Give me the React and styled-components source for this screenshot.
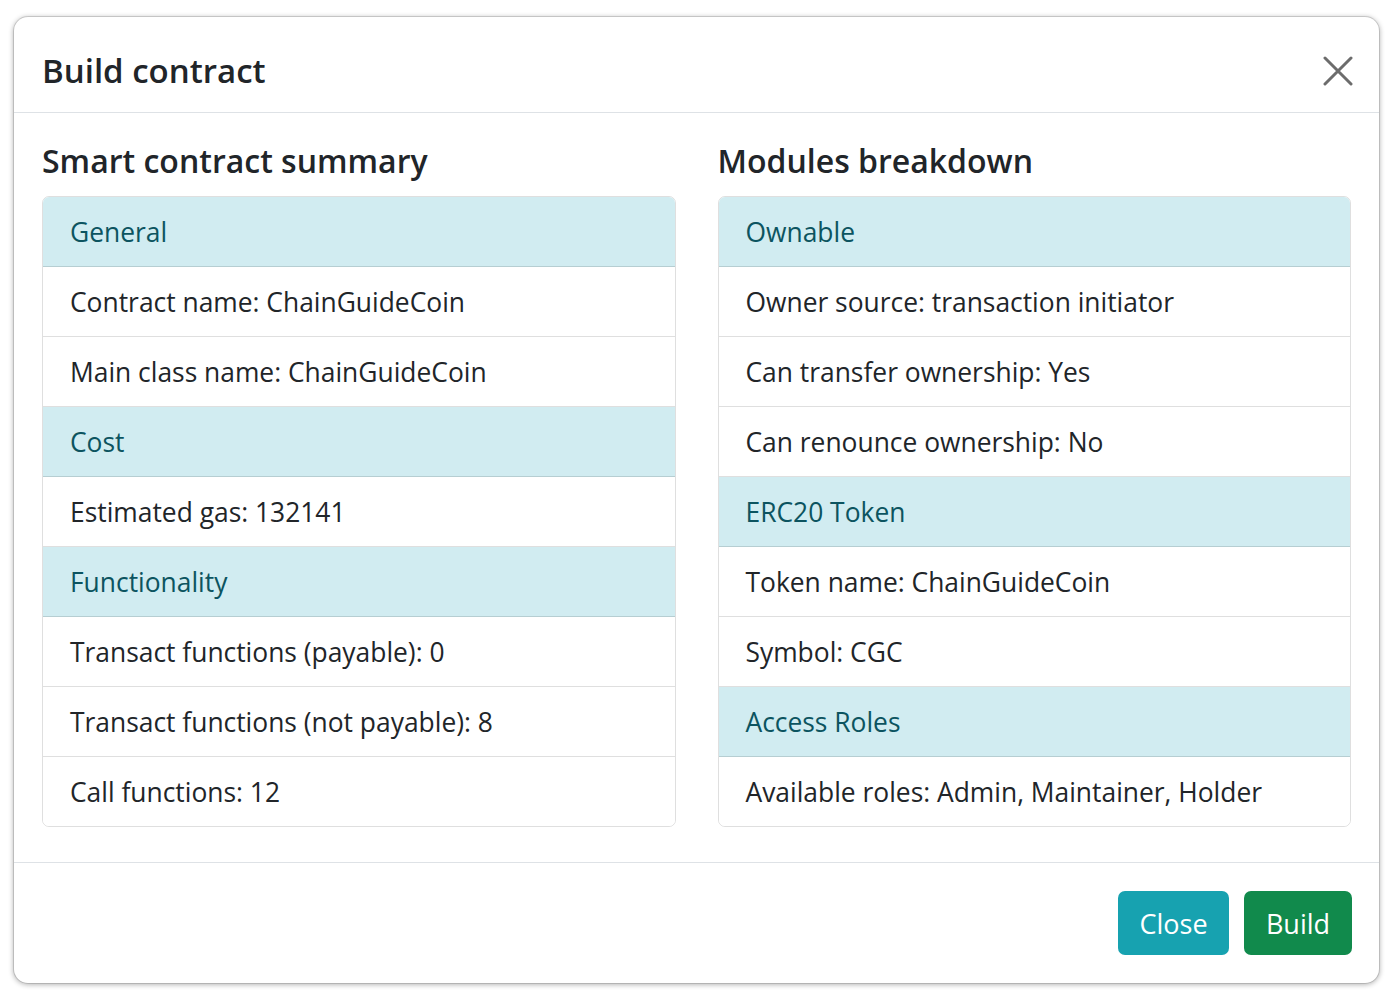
import React from "react";
import styled, { createGlobalStyle } from "styled-components";

const Global = createGlobalStyle`
  html, body { margin: 0; padding: 0; background: #fff; }
  body { font-family: "Open Sans", "Noto Sans", sans-serif; color: #212529; }
  * { box-sizing: border-box; }
`;

const Page = styled.div`
  width: 1400px;
  height: 1000px;
  padding: 17px 21px 17px 14px;
`;

const Modal = styled.div`
  width: 1365px;
  height: 966px;
  background: #fff;
  border-radius: 14px;
  box-shadow: 0 0 0 1px rgba(0,0,0,0.12), 0 1px 5px 1px rgba(0,0,0,0.28);
  display: flex;
  flex-direction: column;
`;

const Header = styled.div`
  height: 96px;
  display: flex;
  align-items: center;
  justify-content: space-between;
  padding: 12px 25px 0 28px;
  border-bottom: 1px solid #dee2e6;
`;

const Title = styled.h5`
  margin: 0;
  font-size: 33px;
  font-weight: 600;
  line-height: 40px;
  color: #212529;
`;

const CloseX = styled.button`
  width: 32px;
  height: 32px;
  padding: 0;
  border: 0;
  background: transparent;
  display: flex;
  align-items: center;
  justify-content: center;
  cursor: pointer;
`;

const Body = styled.div`
  flex: 1;
  padding: 28px 28px 33px;
  display: grid;
  grid-template-columns: 1fr 1fr;
  column-gap: 42px;
  align-items: start;
`;

const Column = styled.div`
  display: flex;
  flex-direction: column;
`;

const Heading = styled.h4`
  margin: 0 0 15px;
  font-size: 32px;
  font-weight: 600;
  line-height: 40px;
  color: #212529;
`;

const List = styled.ul`
  margin: 0;
  padding: 0;
  list-style: none;
  border: 1px solid rgba(0,0,0,0.125);
  border-radius: 7px;
  overflow: hidden;
`;

const Item = styled.li`
  height: ${(p) => (p.$last ? "69px" : "70px")};
  display: flex;
  align-items: center;
  padding: 0 27px;
  font-size: 26.4px;
  border-bottom: ${(p) => (p.$last ? "0" : "1px solid rgba(0,0,0,0.125)")};
  background: ${(p) => (p.$info ? "#d1ecf1" : "#fff")};
  color: ${(p) => (p.$info ? "#0c5460" : "#212529")};
`;

const Footer = styled.div`
  height: 121px;
  border-top: 1px solid #dee2e6;
  display: flex;
  align-items: center;
  justify-content: flex-end;
  gap: 15px;
  padding: 0 27px 0 28px;
`;

const Button = styled.button`
  height: 64px;
  width: ${(p) => p.$w}px;
  border: 0;
  border-radius: 7px;
  font-family: inherit;
  font-size: 27px;
  color: #fff;
  background: ${(p) => p.$bg};
  cursor: pointer;
`;

const summary = [
  { t: "General", info: true },
  { t: "Contract name: ChainGuideCoin" },
  { t: "Main class name: ChainGuideCoin" },
  { t: "Cost", info: true },
  { t: "Estimated gas: 132141" },
  { t: "Functionality", info: true },
  { t: "Transact functions (payable): 0" },
  { t: "Transact functions (not payable): 8" },
  { t: "Call functions: 12" },
];

const modules = [
  { t: "Ownable", info: true },
  { t: "Owner source: transaction initiator" },
  { t: "Can transfer ownership: Yes" },
  { t: "Can renounce ownership: No" },
  { t: "ERC20 Token", info: true },
  { t: "Token name: ChainGuideCoin" },
  { t: "Symbol: CGC" },
  { t: "Access Roles", info: true },
  { t: "Available roles: Admin, Maintainer, Holder" },
];

function Section({ title, items }) {
  return (
    <Column>
      <Heading>{title}</Heading>
      <List>
        {items.map((it, i) => (
          <Item key={i} $info={it.info} $last={i === items.length - 1}>
            {it.t}
          </Item>
        ))}
      </List>
    </Column>
  );
}

export default function App() {
  return (
    <>
      <Global />
      <Page>
        <Modal>
          <Header>
            <Title>Build contract</Title>
            <CloseX aria-label="Close">
              <svg width="30" height="30" viewBox="0 0 30 30">
                <path d="M2 2 L28 28 M28 2 L2 28" stroke="#6c6c6c" strokeWidth="3" strokeLinecap="round" />
              </svg>
            </CloseX>
          </Header>
          <Body>
            <Section title="Smart contract summary" items={summary} />
            <Section title="Modules breakdown" items={modules} />
          </Body>
          <Footer>
            <Button $w={111} $bg="#17a2b0">Close</Button>
            <Button $w={108} $bg="#118a4c">Build</Button>
          </Footer>
        </Modal>
      </Page>
    </>
  );
}
